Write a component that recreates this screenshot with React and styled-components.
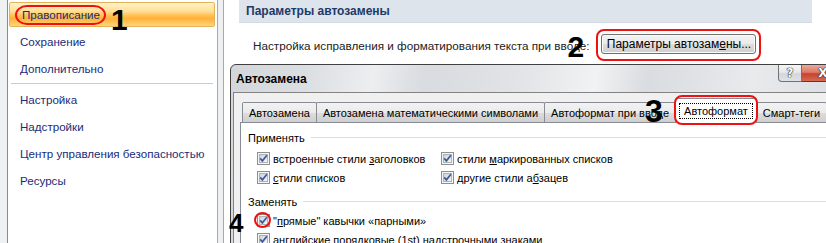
import React from "react";
import styled, { createGlobalStyle } from "styled-components";

const GlobalStyle = createGlobalStyle`
  body {
    margin: 0;
    background: #eef0f2;
  }
  * {
    box-sizing: border-box;
  }
`;

const Screen = styled.div`
  position: relative;
  width: 826px;
  height: 243px;
  overflow: hidden;
  display: flex;
  background: #eef0f2;
  font-family: "Liberation Sans", Arial, sans-serif;
`;

/* ---------- Word options window ---------- */

const Sidebar = styled.nav`
  flex-shrink: 0;
  width: 211px;
  margin-left: 7px;
  padding-top: 2px;
  background: #fff;
  border-left: 1px solid #8c8c8c;
  border-right: 1px solid #a9a9a9;
`;

const MenuItem = styled.div`
  position: relative;
  display: flex;
  align-items: center;
  height: 25px;
  margin: 0 2px 2px 1px;
  padding-left: 10px;
  font-size: 11.6px;
  color: #1a2b78;
  border: 1px solid ${(p) => (p.$active ? "#e3b35c" : "transparent")};
  border-radius: 2px;
  background: ${(p) =>
    p.$active
      ? "linear-gradient(#fff2c6 0%, #ffe09a 35%, #ffc04f 55%, #ffb13a 68%, #ffd679 100%)"
      : "transparent"};
`;

const Separator = styled.div`
  height: 1px;
  margin: 0 4px 3px 3px;
  background: #c6cdd5;
`;

const Marker = styled.span`
  position: relative;
  margin-left: -5px;
  padding: 0 4px 0 5px;
  line-height: 16px;
  border: 2px solid #ee1111;
  border-radius: 12px / 10px;
`;

const Callout = styled.span`
  position: absolute;
  left: ${(p) => p.$x}px;
  top: ${(p) => p.$y}px;
  font-family: "Liberation Sans", Arial, sans-serif;
  font-weight: bold;
  font-size: ${(p) => p.$size || 30}px;
  line-height: ${(p) => p.$size || 30}px;
  color: #000;
  z-index: 5;
`;

const MainPane = styled.section`
  flex: 1;
  margin-left: 5px;
  padding-left: 15px;
  background: #fff;
  border-left: 1px solid #a9a9a9;
`;

const SectionHeader = styled.div`
  display: flex;
  align-items: center;
  height: 23px;
  margin-right: 14px;
  padding-left: 7px;
  background: #dde4ec;
  border-bottom: 1px solid #d2dae3;
  font-size: 12px;
  font-weight: bold;
  color: #1e3a66;
`;

const SettingRow = styled.div`
  display: flex;
  align-items: center;
  margin-top: 6px;
  padding-left: 14px;
  font-size: 11.7px;
  color: #222;
`;

const ButtonFrame = styled.span`
  position: relative;
  display: inline-flex;
  margin-left: 7px;
  padding: 3px 3px 5px;
  border: 2px solid #ee1111;
  border-radius: 8px;
`;

const PushButton = styled.button`
  width: 155px;
  height: 20px;
  padding: 0;
  border: 1px solid #707070;
  border-radius: 3px;
  background: linear-gradient(#f2f2f2 0%, #ebebeb 50%, #dddddd 51%, #cfcfcf 100%);
  box-shadow: inset 0 0 0 1px #fbfbfb;
  font-family: "Liberation Sans", Arial, sans-serif;
  font-size: 12px;
  color: #000;
`;

/* ---------- AutoCorrect dialog ---------- */

const Dialog = styled.div`
  position: absolute;
  left: 230px;
  top: 64px;
  width: 622px;
  height: 200px;
  display: flex;
  flex-direction: column;
  padding-left: 2px;
  border: 1px solid #404040;
  border-radius: 6px 6px 0 0;
  background: linear-gradient(
    100deg,
    #d3d6da 0%,
    #dcdfe2 12%,
    #eceef0 22%,
    #d8dbdf 30%,
    #e2e4e7 45%,
    #f1f2f3 56%,
    #d9dce0 64%,
    #e8eaec 80%,
    #d6d9dd 100%
  );
  z-index: 2;
`;

const TitleBar = styled.div`
  display: flex;
  align-items: flex-start;
  height: 27px;
`;

const Title = styled.span`
  margin-top: 7px;
  padding-left: 3px;
  font-size: 12px;
  font-weight: bold;
  line-height: 15px;
  color: #000;
`;

const CaptionButtons = styled.div`
  display: flex;
  margin-left: auto;
  margin-right: 6px;
`;

const CaptionButton = styled.div`
  display: flex;
  align-items: center;
  justify-content: center;
  width: ${(p) => (p.$close ? 43 : 24)}px;
  height: 17px;
  border: 1px solid ${(p) => (p.$close ? "#6d3128" : "#6f7378")};
  border-top: none;
  border-left-width: ${(p) => (p.$close ? 0 : 1)}px;
  border-radius: ${(p) => (p.$close ? "0 0 4px 0" : "0 0 0 4px")};
  background: ${(p) =>
    p.$close
      ? "linear-gradient(#e9a99b 0%, #dd7b67 45%, #c8432d 55%, #d66a52 100%)"
      : "linear-gradient(#f4f5f6 0%, #e6e8ea 45%, #d3d6da 55%, #dfe2e5 100%)"};
  font-family: "DejaVu Sans", Verdana, sans-serif;
  font-size: 12px;
  font-weight: bold;
  color: #fff;
  text-shadow: 0 0 1px #222, 0 0 1px #222, 0 0 1px #222;
`;

const Client = styled.div`
  flex: 1;
  display: flex;
  flex-direction: column;
  padding: 5px 0 0 6px;
  background: #f0f0f0;
  border: 1px solid #838383;
`;

const TabStrip = styled.div`
  display: flex;
  align-items: flex-end;
  padding-left: 3px;
`;

const Tab = styled.div`
  position: relative;
  display: flex;
  align-items: center;
  height: ${(p) => (p.$selected ? 25 : 20)}px;
  margin-left: -1px;
  margin-bottom: ${(p) => (p.$selected ? -1 : 0)}px;
  padding: 0 ${(p) => (p.$selected ? 3 : 6)}px;
  border: 1px solid #898c95;
  border-bottom: none;
  border-radius: 2px 2px 0 0;
  background: ${(p) =>
    p.$selected
      ? "#fff"
      : "linear-gradient(#f2f2f2 0%, #ebebeb 50%, #dddddd 51%, #cfcfcf 100%)"};
  font-size: 11px;
  color: #000;
  white-space: nowrap;
  z-index: ${(p) => (p.$selected ? 2 : 1)};

  &::after {
    content: "";
    display: ${(p) => (p.$marked ? "block" : "none")};
    position: absolute;
    left: -2px;
    right: -2px;
    top: -4px;
    bottom: -2px;
    border: 2px solid #ee1111;
    border-radius: 8px;
  }
`;

const FocusLabel = styled.span`
  padding: 1px 4px;
  border: 1px dotted #000;
`;

const Panel = styled.div`
  flex: 1;
  padding: 7px 0 0 7px;
  background: #fff;
  border: 1px solid #898c95;
`;

const GroupTitle = styled.div`
  display: flex;
  align-items: center;
  gap: 6px;
  height: 15px;
  margin-top: ${(p) => p.$gap || 0}px;
  font-size: 11px;
  color: #000;

  &::after {
    content: "";
    flex: 1;
    height: 1px;
    background: #d5dfe5;
  }
`;

const OptionGrid = styled.div`
  display: grid;
  grid-template-columns: ${(p) => (p.$columns === 2 ? "184px 1fr" : "1fr")};
  grid-auto-rows: 19px;
  margin-top: ${(p) => p.$gap || 0}px;
  padding-left: 9px;
`;

const Option = styled.label`
  display: flex;
  align-items: center;
  gap: 3px;
  font-size: 11px;
  color: #000;
  white-space: nowrap;
`;

const BoxWrap = styled.span`
  position: relative;
  display: inline-flex;
  flex-shrink: 0;
  width: 13px;
  height: 13px;

  &::after {
    content: "";
    display: ${(p) => (p.$marked ? "block" : "none")};
    position: absolute;
    left: -3px;
    right: -1px;
    top: -2px;
    bottom: -1px;
    border: 2px solid #ee1111;
    border-radius: 50%;
  }
`;

const CheckBox = ({ marked, children }) => (
  <BoxWrap $marked={marked}>
    <svg width="13" height="13" viewBox="0 0 13 13">
      <defs>
        <linearGradient id="cbfill" x1="0" y1="0" x2="1" y2="1">
          <stop offset="0" stopColor="#cdd1d7" />
          <stop offset="1" stopColor="#f7f8f9" />
        </linearGradient>
      </defs>
      <rect x="0.5" y="0.5" width="12" height="12" fill="#f5f5f5" stroke="#8e8f8f" />
      <rect x="2.5" y="2.5" width="8" height="8" fill="url(#cbfill)" stroke="#aeb3b9" />
      <path d="M3.2 6.4 L5.4 8.9 L9.9 3.2" fill="none" stroke="#3d5a98" strokeWidth="1.7" />
    </svg>
    {children}
  </BoxWrap>
);

const menu = ["Сохранение", "Дополнительно"];

const menu2 = ["Настройка", "Надстройки", "Центр управления безопасностью", "Ресурсы"];

export default function App() {
  return (
    <Screen>
      <GlobalStyle />
      <Sidebar>
        <MenuItem $active>
          <Marker>
            Правописание
            <Callout $x={94} $y={-2}>1</Callout>
          </Marker>
        </MenuItem>
        {menu.map((m) => (
          <MenuItem key={m}>{m}</MenuItem>
        ))}
        <Separator />
        {menu2.map((m) => (
          <MenuItem key={m}>{m}</MenuItem>
        ))}
      </Sidebar>

      <MainPane>
        <SectionHeader>Параметры автозамены</SectionHeader>
        <SettingRow>
          Настройка исправления и форматирования текста при вводе:
          <ButtonFrame>
            <Callout $x={-31} $y={1}>2</Callout>
            <PushButton>
              Параметры автозам<u>е</u>ны...
            </PushButton>
          </ButtonFrame>
        </SettingRow>
      </MainPane>

      <Dialog>
        <TitleBar>
          <Title>Автозамена</Title>
          <CaptionButtons>
            <CaptionButton>?</CaptionButton>
            <CaptionButton $close>X</CaptionButton>
          </CaptionButtons>
        </TitleBar>
        <Client>
          <TabStrip>
            <Tab>Автозамена</Tab>
            <Tab>Автозамена математическими символами</Tab>
            <Tab>Автоформат при вводе</Tab>
            <Tab $selected $marked>
              <Callout $x={-31} $y={-4} $size={32}>3</Callout>
              <FocusLabel>Автоформат</FocusLabel>
            </Tab>
            <Tab>Смарт-теги</Tab>
          </TabStrip>
          <Panel>
            <GroupTitle>Применять</GroupTitle>
            <OptionGrid $columns={2} $gap={4}>
              <Option>
                <CheckBox />
                <span>
                  встроенные стили <u>з</u>аголовков
                </span>
              </Option>
              <Option>
                <CheckBox />
                <span>
                  стили <u>м</u>аркированных списков
                </span>
              </Option>
              <Option>
                <CheckBox />
                <span>
                  <u>с</u>тили списков
                </span>
              </Option>
              <Option>
                <CheckBox />
                <span>
                  другие стили а<u>б</u>зацев
                </span>
              </Option>
            </OptionGrid>
            <GroupTitle $gap={7}>Заменять</GroupTitle>
            <OptionGrid $gap={2}>
              <Option>
                <CheckBox marked>
                  <Callout $x={-28} $y={-4} $size={26}>4</Callout>
                </CheckBox>
                <span>
                  "<u>п</u>рямые" кавычки «парными»
                </span>
              </Option>
              <Option>
                <CheckBox />
                <span>английские порядковые (1st) надстрочными знаками</span>
              </Option>
            </OptionGrid>
          </Panel>
        </Client>
      </Dialog>
    </Screen>
  );
}
